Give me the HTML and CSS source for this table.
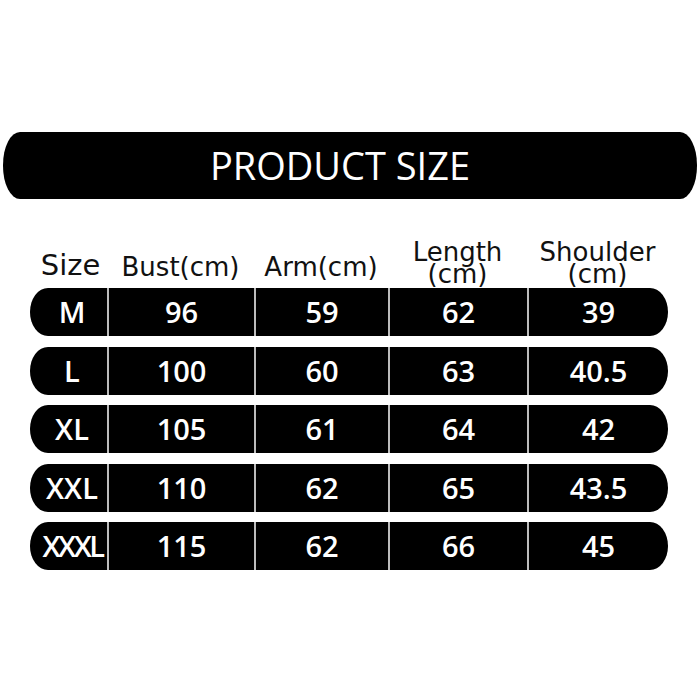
FILE: index.html
```html
<!DOCTYPE html>
<html>
<head>
<meta charset="utf-8">
<link rel="stylesheet" href="styles.css">
</head>
<body>
<div class="page">
  <div class="title-bar"><span class="title">PRODUCT SIZE</span></div>
  <div class="table">
    <div class="head">
      <div class="hcell size-h">Size</div>
      <div class="hcell">Bust(cm)</div>
      <div class="hcell">Arm(cm)</div>
      <div class="hcell stack"><span>Length</span><span>(cm)</span></div>
      <div class="hcell stack"><span>Shoulder</span><span>(cm)</span></div>
    </div>
    <div class="rows">
      <div class="row"><div class="cell sz">M</div><div class="cell">96</div><div class="cell">59</div><div class="cell">62</div><div class="cell">39</div></div>
      <div class="row"><div class="cell sz">L</div><div class="cell">100</div><div class="cell">60</div><div class="cell">63</div><div class="cell">40.5</div></div>
      <div class="row"><div class="cell sz">XL</div><div class="cell">105</div><div class="cell">61</div><div class="cell">64</div><div class="cell">42</div></div>
      <div class="row"><div class="cell sz">XXL</div><div class="cell">110</div><div class="cell">62</div><div class="cell">65</div><div class="cell">43.5</div></div>
      <div class="row"><div class="cell sz narrow">XXXL</div><div class="cell">115</div><div class="cell">62</div><div class="cell">66</div><div class="cell">45</div></div>
    </div>
  </div>
</div>
</body>
</html>
```
FILE: styles.css
```css
html, body {
  margin: 0;
  padding: 0;
  background: #ffffff;
}
.page {
  width: 700px;
  height: 700px;
  padding-top: 132px;
  box-sizing: border-box;
}
.title-bar {
  margin: 0 3px;
  height: 67px;
  background: #000;
  border-radius: 17px / 33px;
  display: flex;
  align-items: center;
  justify-content: center;
  padding-bottom: 2px;
  box-sizing: border-box;
}
.title {
  color: #fff;
  font-family: "Open Sans", sans-serif;
  font-size: 38px;
  line-height: 1;
  font-weight: 400;
  margin-left: -20px;
}
.table {
  margin: 0 32px 0 30px;
}
.head, .row {
  display: grid;
  grid-template-columns: 77px 147px 134px 139px 141px;
}
.head {
  height: 89px;
  align-items: end;
}
.hcell {
  font-family: "DejaVu Sans", sans-serif;
  font-size: 26px;
  line-height: 1;
  color: #111;
  text-align: center;
  padding-bottom: 8px;
}
.size-h {
  font-size: 29px;
  padding-bottom: 8px;
  padding-left: 4px;
}
.stack {
  display: flex;
  flex-direction: column;
  align-items: center;
  line-height: 22px;
  padding-bottom: 3px;
}
.rows {
  display: flex;
  flex-direction: column;
  gap: 10.5px;
}
.row {
  height: 48px;
  background: #000;
  border-radius: 18px / 24px;
  overflow: hidden;
}
.cell {
  display: flex;
  align-items: center;
  justify-content: center;
  color: #fff;
  font-family: "Open Sans", sans-serif;
  font-weight: 600;
  font-size: 29px;
  line-height: 1;
  border-left: 2px solid #bcbcbc;
  padding-bottom: 1px;
}
.cell.sz {
  border-left: none;
  padding-left: 7px;
}
.cell.narrow {
  letter-spacing: -2.5px;
  padding-left: 8px;
}
```
